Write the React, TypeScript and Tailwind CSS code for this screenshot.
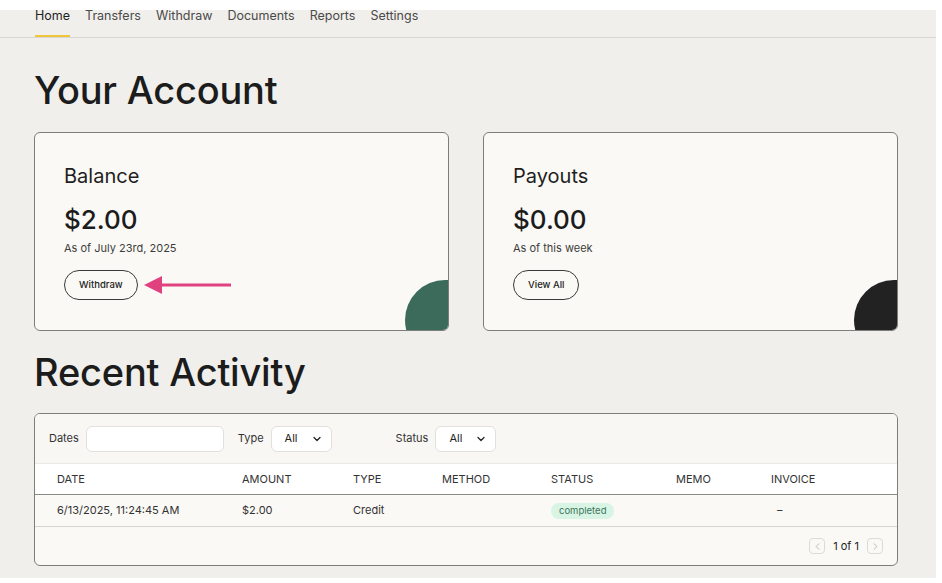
import { ChevronDown, ChevronLeft, ChevronRight } from 'lucide-react';

const font = { fontFamily: 'Inter, "Noto Sans", sans-serif' };

const tabs = ['Home', 'Transfers', 'Withdraw', 'Documents', 'Reports', 'Settings'];
const cols = ['DATE', 'AMOUNT', 'TYPE', 'METHOD', 'STATUS', 'MEMO', 'INVOICE'];
const grid = 'grid grid-cols-[185px_111px_89px_109px_125px_95px_1fr] pl-[22px]';

function Card({ title, amount, note, action, blob, arrow }: { title: string; amount: string; note: string; action: string; blob: string; arrow?: boolean }) {
  return (
    <div className="relative overflow-hidden h-[199px] rounded-[6px] border border-[#7d7d7a] bg-[#faf9f5] pl-[29px] pt-[31px]">
      <div className="text-[20px] leading-[24px] text-[#1f1f1f]">{title}</div>
      <div className="mt-[17px] text-[26px] leading-[30px] font-medium text-[#1c1c1c]">{amount}</div>
      <div className="mt-[6px] text-[11px] leading-[14px] text-[#3d3d3d]">{note}</div>
      <div className="mt-[15px] flex items-center">
        <button className="h-[30px] px-[14px] rounded-full border border-[#3a3a3a] text-[9.5px] font-medium text-[#1c1c1c]">{action}</button>
        {arrow && (
          <svg width="90" height="20" viewBox="0 0 90 20" className="ml-[6px]">
            <polygon points="0,10 18,1 18,19" fill="#e0427f" />
            <rect x="16" y="8.5" width="71" height="3" fill="#e0427f" />
          </svg>
        )}
      </div>
      <div className={`absolute left-[370px] top-[147px] w-[80px] h-[80px] rounded-full ${blob}`} />
    </div>
  );
}

function Select() {
  return (
    <div className="h-[26px] w-[61px] rounded-[6px] border border-[#e2e0da] bg-white flex items-center pl-[13px] gap-[13px] text-[11px] text-[#222]">
      All <ChevronDown size={12} strokeWidth={2.5} />
    </div>
  );
}

export default function App() {
  return (
    <div className="w-[942px] h-[583px] bg-white overflow-hidden" style={font}>
      <div className="mt-[10px] w-[936px] h-[568px] bg-[#f0efeb] flex flex-col">
        <nav className="h-[28px] border-b border-[#d9d7d1] flex items-start gap-[15px] pl-[35px] text-[12.5px] text-[#4a4a4a]">
          {tabs.map((t, i) => (
            <div key={t} className={`h-[27px] leading-[11px] ${i === 0 ? 'text-[#1f1f1f] border-b-2 border-[#efc63a]' : ''}`}>{t}</div>
          ))}
        </nav>
        <div className="px-[34px]">
          <h1 className="mt-[28px] text-[38px] leading-[48px] font-medium tracking-[-0.2px] text-[#1c1c1c]">Your Account</h1>
          <div className="mt-[18px] grid grid-cols-2 gap-[34px] w-[864px]">
            <Card title="Balance" amount="$2.00" note="As of July 23rd, 2025" action="Withdraw" blob="bg-[#3c6b5c]" arrow />
            <Card title="Payouts" amount="$0.00" note="As of this week" action="View All" blob="bg-[#222222]" />
          </div>
          <h2 className="mt-[17px] text-[38px] leading-[48px] font-medium tracking-[-0.2px] text-[#1c1c1c]">Recent Activity</h2>
          <div className="mt-[17px] w-[864px] rounded-[6px] border border-[#7d7d7a] bg-[#faf9f5] overflow-hidden">
            <div className="h-[49px] bg-[#f8f7f3] flex items-center pl-[14px] text-[11px] text-[#333]">
              <span>Dates</span>
              <div className="ml-[7px] h-[26px] w-[138px] rounded-[6px] border border-[#e2e0da] bg-white" />
              <span className="ml-[14px]">Type</span>
              <div className="ml-[7px]"><Select /></div>
              <span className="ml-[64px]">Status</span>
              <div className="ml-[7px]"><Select /></div>
            </div>
            <div className={`${grid} h-[32px] items-center bg-white border-t border-[#ebe9e4] border-b border-b-[#8a8a87] text-[11px] text-[#333]`}>
              {cols.map((c) => <div key={c}>{c}</div>)}
            </div>
            <div className={`${grid} h-[32px] items-center border-b border-[#d6d4ce] text-[11px] text-[#333]`}>
              <div>6/13/2025, 11:24:45 AM</div>
              <div>$2.00</div>
              <div>Credit</div>
              <div />
              <div><span className="inline-block rounded-full bg-[#d8f4e5] px-[8px] leading-[16px] text-[9.5px] text-[#3c7559]">completed</span></div>
              <div />
              <div className="pl-[6px]">–</div>
            </div>
            <div className="h-[38px] flex items-center justify-end pr-[14px] gap-[8px] text-[11px] text-[#222]">
              <div className="w-[16px] h-[16px] rounded-[4px] border border-[#dddbd5] flex items-center justify-center text-[#b5b3ad]"><ChevronLeft size={11} /></div>
              <span>1 of 1</span>
              <div className="w-[16px] h-[16px] rounded-[4px] border border-[#dddbd5] flex items-center justify-center text-[#b5b3ad]"><ChevronRight size={11} /></div>
            </div>
          </div>
        </div>
      </div>
    </div>
  );
}
